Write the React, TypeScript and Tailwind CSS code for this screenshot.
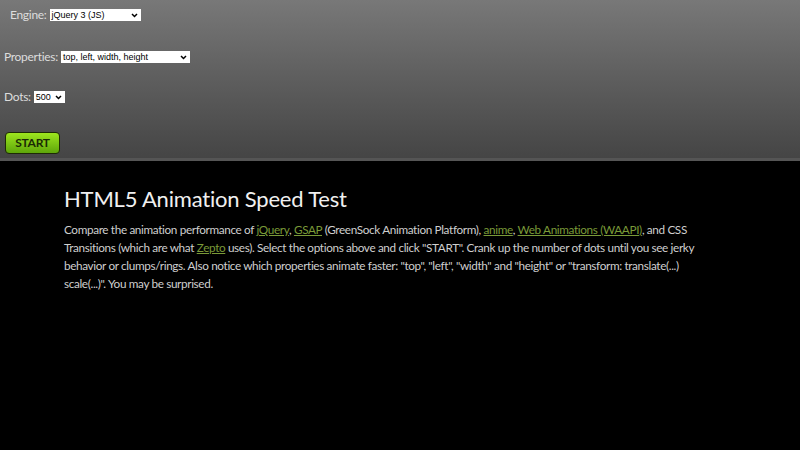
export default function App() {
  const font = { fontFamily: 'Lato, "Noto Sans", sans-serif' };
  return (
    <div className="min-h-[450px] w-[800px] bg-black" style={font}>
      {/* Controls header */}
      <header className="h-[161px] bg-gradient-to-b from-[#787878] to-[#454545] border-b-[3px] border-[#555555] pl-[4px] pt-[9px] text-[12px] tracking-[-0.3px] text-[#dddddd]">
        <Row label="Engine:" value="jQuery 3 (JS)" width="w-[91px]" indent="ml-[6px]" />
        <div className="h-[30px]" />
        <Row label="Properties:" value="top, left, width, height" width="w-[129px]" />
        <div className="h-[28px]" />
        <Row label="Dots:" value="500" width="w-[31px]" />
        <div className="h-[29px]" />
        <button className="ml-[1px] h-[22px] w-[55px] rounded-[4px] border border-[#1e2a05] bg-gradient-to-b from-[#9de61e] to-[#5ea60a] text-[12px] font-bold tracking-[-0.3px] text-[#1a2a05]">
          START
        </button>
      </header>

      {/* Content */}
      <main className="px-[64px] pt-[23px]">
        <h1 className="text-[22px] leading-[30px] tracking-[-0.2px] text-[#f0f0f0]">HTML5 Animation Speed Test</h1>
        <p className="mt-[7px] w-[650px] text-[11.75px] leading-[18px] tracking-[-0.36px] text-[#cfcfcf]">
          Compare the animation performance of <A>jQuery</A>, <A>GSAP</A> (GreenSock Animation Platform),{" "}
          <A>anime</A>, <A>Web Animations (WAAPI)</A>, and CSS Transitions (which are what <A>Zepto</A> uses).
          Select the options above and click "START". Crank up the number of dots until you see jerky behavior or
          clumps/rings. Also notice which properties animate faster: "top", "left", "width" and "height" or
          "transform: translate(...) scale(...)". You may be surprised.
        </p>
      </main>
    </div>
  );
}

function A({ children }: { children: React.ReactNode }) {
  return <span className="text-[#7a9a38] underline">{children}</span>;
}

function Row({
  label,
  value,
  width,
  indent = "",
}: {
  label: string;
  value: string;
  width: string;
  indent?: string;
}) {
  return (
    <div className={`flex h-[12px] items-center gap-[3px] ${indent}`}>
      <span className="leading-none">{label}</span>
      <span
        className={`relative flex h-[12px] ${width} items-center bg-white pl-[2px] text-[9px] leading-none tracking-normal text-black`}
        style={{ fontFamily: '"Liberation Sans", Arial, sans-serif' }}
      >
        {value}
        <svg className="absolute right-[3px] top-[4px]" width="7" height="5" viewBox="0 0 7 5">
          <path d="M1 1 L3.5 3.5 L6 1" stroke="black" strokeWidth="1.5" fill="none" />
        </svg>
      </span>
    </div>
  );
}
